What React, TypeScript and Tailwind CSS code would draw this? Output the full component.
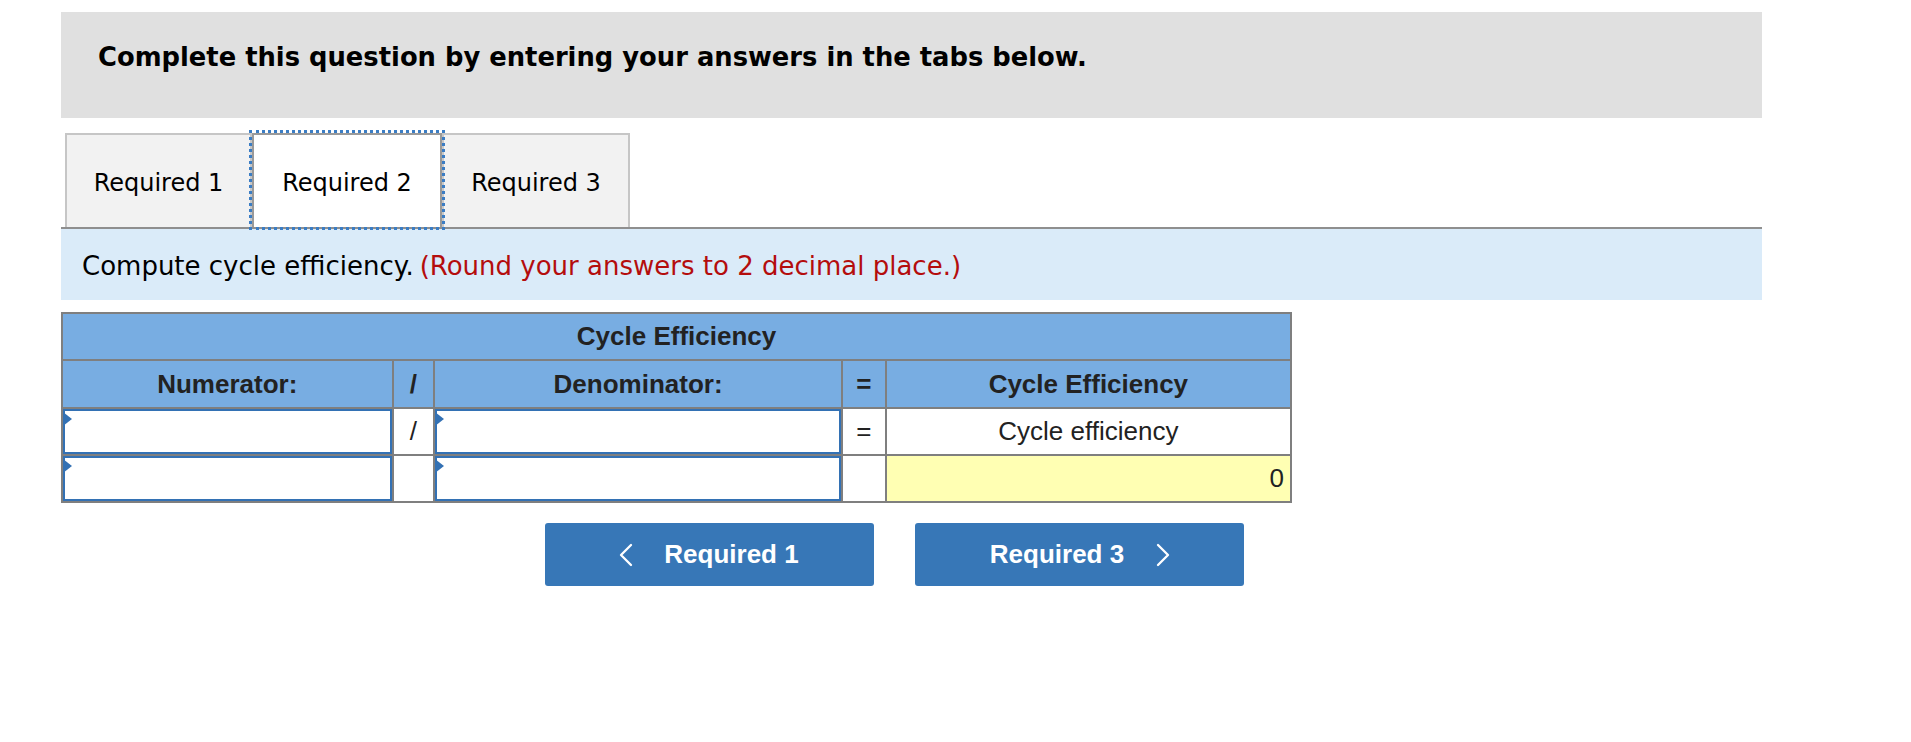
import { ChevronLeft, ChevronRight } from "lucide-react";

const verdana = { fontFamily: '"DejaVu Sans", Verdana, sans-serif' };

function InputCell() {
  return (
    <td className="border-2 border-[#7f7f7f] p-0 h-[47px]">
      <div className="relative w-full h-full border-2 border-[#3371b4] bg-white">
        <span className="absolute -left-[2px] top-[1px] w-0 h-0 border-t-[7px] border-b-[7px] border-l-[9px] border-t-transparent border-b-transparent border-l-[#3371b4]" />
      </div>
    </td>
  );
}

export default function App() {
  return (
    <div className="bg-white min-h-screen pl-[61px] pt-[12px]" style={verdana}>
      <div className="w-[1701px]">
        {/* Header */}
        <div className="bg-[#e0e0e0] h-[106px] flex items-start pl-[37px] pt-[26px]">
          <h1 className="font-bold text-[25.8px] text-black">
            Complete this question by entering your answers in the tabs below.
          </h1>
        </div>

        {/* Tabs */}
        <div className="mt-[15px] pl-[4px] flex items-end h-[94px]">
          <div className="w-[187px] h-[94px] pt-[3px] bg-[#f2f2f2] border-2 border-b-0 border-[#c6c6c6] flex items-center justify-center text-[24px] text-black">
            Required 1
          </div>
          <div className="w-[190px] h-[94px] pt-[3px] bg-white border-2 border-b-0 border-[#9a9a9a] outline-dotted outline-[3px] outline-[#3b7dc4] outline-offset-0 flex items-center justify-center text-[24px] text-black relative z-10">
            Required 2
          </div>
          <div className="w-[188px] h-[94px] pt-[3px] bg-[#f2f2f2] border-2 border-b-0 border-[#c6c6c6] flex items-center justify-center text-[24px] text-black">
            Required 3
          </div>
        </div>

        {/* Instruction */}
        <div className="border-t-2 border-[#8f8f8f] bg-[#daebf9] h-[73px] flex items-center pt-[3px] pl-[21px] text-[26px]">
          <span className="text-black">Compute cycle efficiency.</span>
          <span className="text-[#b40d0d] ml-[6px]">(Round your answers to 2 decimal place.)</span>
        </div>

        {/* Table */}
        <table
          className="mt-[12px] border-collapse border-2 border-[#7f7f7f] w-[1231px] text-[#222]"
          style={{ fontFamily: '"Liberation Sans", Arial, sans-serif' }}
        >
          <colgroup>
            <col className="w-[331px]" />
            <col className="w-[42px]" />
            <col className="w-[408px]" />
            <col className="w-[44px]" />
            <col className="w-[406px]" />
          </colgroup>
          <thead>
            <tr className="bg-[#78ade2] h-[47px]">
              <th colSpan={5} className="border-2 border-[#7f7f7f] text-[26px] font-bold text-center">
                Cycle Efficiency
              </th>
            </tr>
            <tr className="bg-[#78ade2] h-[48px]">
              <th className="border-2 border-[#7f7f7f] text-[26px] font-bold">Numerator:</th>
              <th className="border-2 border-[#7f7f7f] text-[26px] font-bold">/</th>
              <th className="border-2 border-[#7f7f7f] text-[26px] font-bold">Denominator:</th>
              <th className="border-2 border-[#7f7f7f] text-[26px] font-bold">=</th>
              <th className="border-2 border-[#7f7f7f] text-[26px] font-bold">Cycle Efficiency</th>
            </tr>
          </thead>
          <tbody>
            <tr className="h-[47px]">
              <InputCell />
              <td className="border-2 border-[#7f7f7f] text-center text-[26px] bg-white">/</td>
              <InputCell />
              <td className="border-2 border-[#7f7f7f] text-center text-[26px] bg-white">=</td>
              <td className="border-2 border-[#7f7f7f] text-center text-[26px] bg-white">Cycle efficiency</td>
            </tr>
            <tr className="h-[47px]">
              <InputCell />
              <td className="border-2 border-[#7f7f7f] bg-white" />
              <InputCell />
              <td className="border-2 border-[#7f7f7f] bg-white" />
              <td className="border-2 border-[#7f7f7f] bg-[#ffffb3] text-right pr-[6px] text-[26px]">0</td>
            </tr>
          </tbody>
        </table>

        {/* Nav buttons */}
        <div
          className="mt-[20px] ml-[484px] flex gap-[41px]"
          style={{ fontFamily: '"Liberation Sans", Arial, sans-serif' }}
        >
          <button className="w-[329px] h-[63px] bg-[#3777b7] rounded-[3px] text-white font-bold text-[26px] flex items-center justify-center gap-[18px]">
            <ChevronLeft size={40} strokeWidth={1.4} className="-ml-[14px]" />
            <span>Required 1</span>
          </button>
          <button className="w-[329px] h-[63px] bg-[#3777b7] rounded-[3px] text-white font-bold text-[26px] flex items-center justify-center gap-[19px]">
            <span className="ml-[14px]">Required 3</span>
            <ChevronRight size={40} strokeWidth={1.4} />
          </button>
        </div>
      </div>
    </div>
  );
}
